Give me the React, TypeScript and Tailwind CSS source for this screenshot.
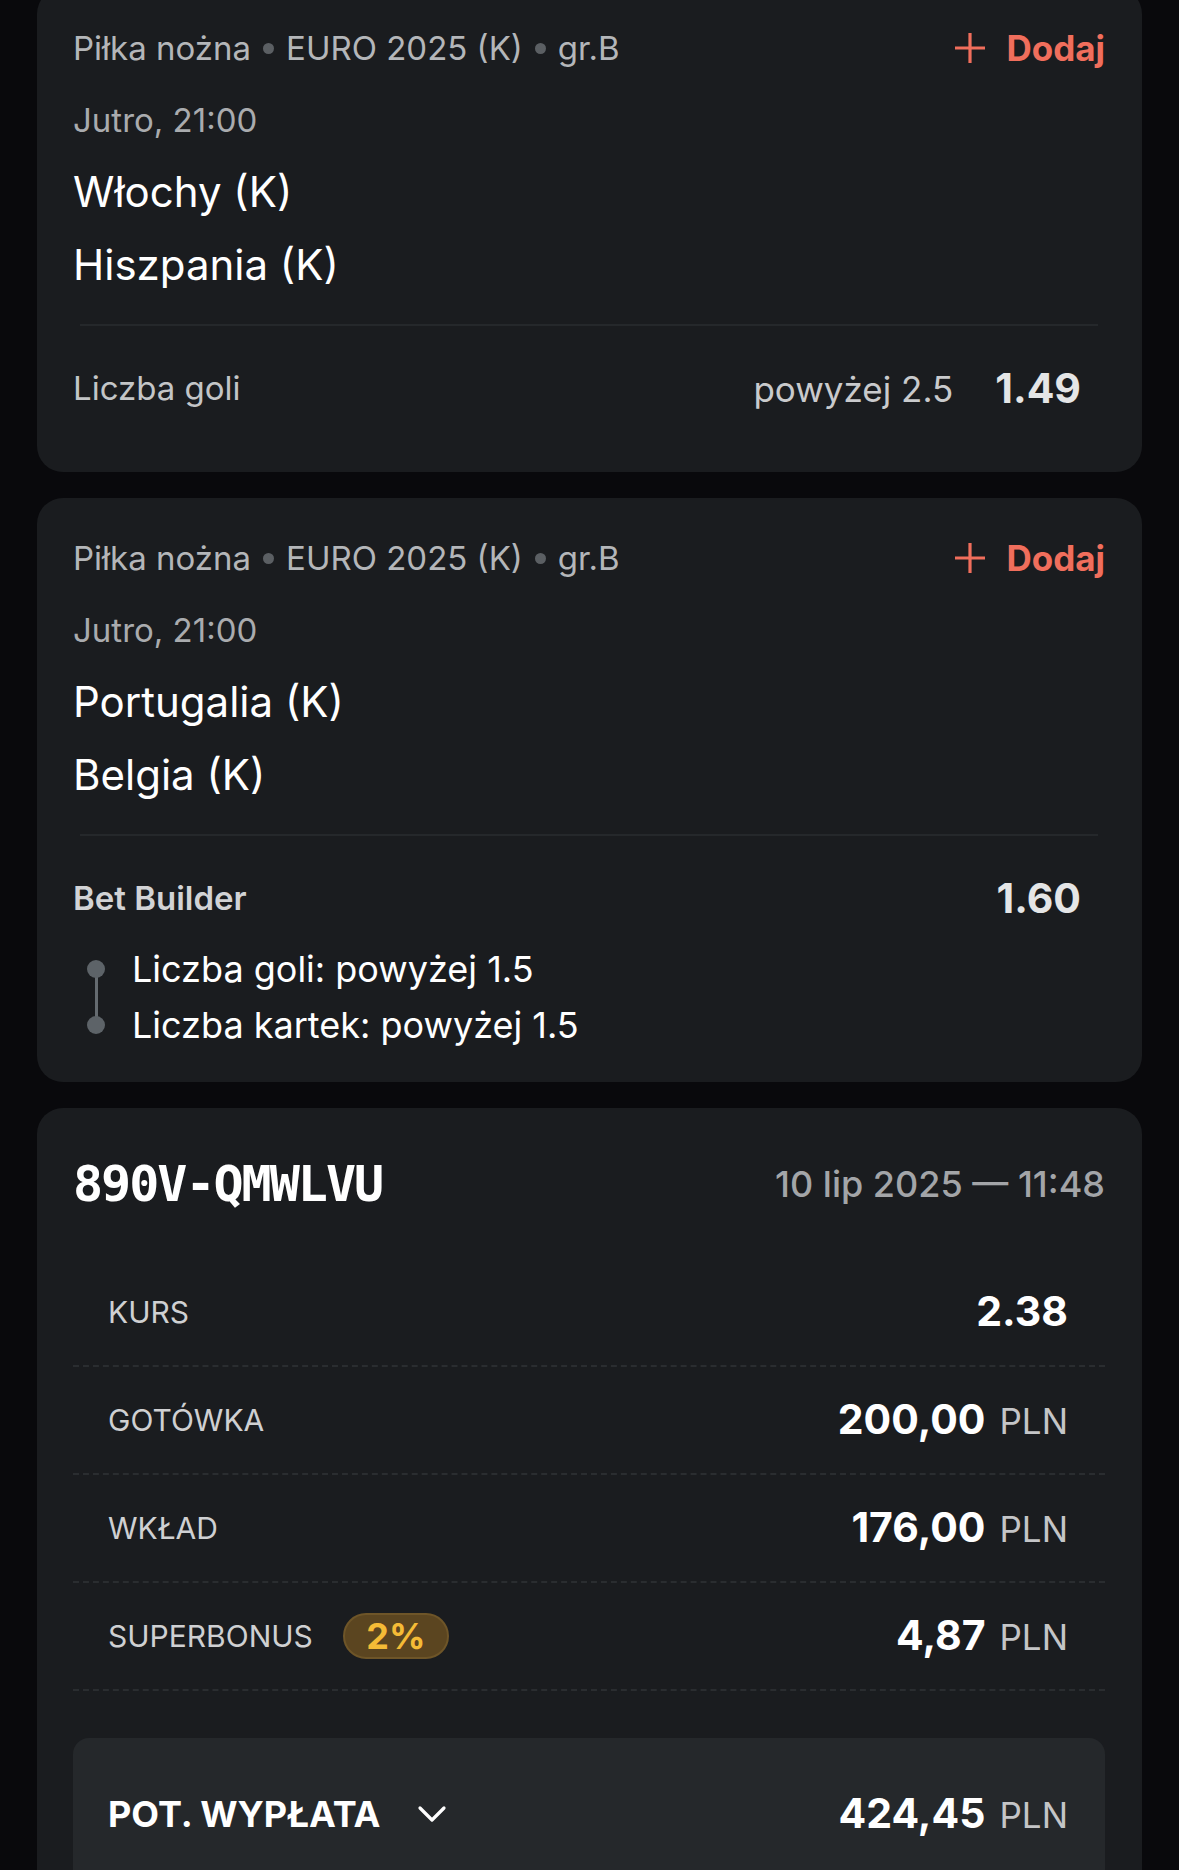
import React from "react";

const font = { fontFamily: "Inter, 'Noto Sans', sans-serif" };

function Plus() {
  return (
    <svg width="34" height="34" viewBox="0 0 34 34" className="shrink-0">
      <path d="M17 2V32M2 17H32" stroke="#f06e5c" strokeWidth="3.2" strokeLinecap="butt" />
    </svg>
  );
}

function Chevron() {
  return (
    <svg width="30" height="18" viewBox="0 0 30 18" className="ml-[37px] shrink-0">
      <path d="M3 3L15 15L27 3" stroke="#ffffff" strokeWidth="3.2" fill="none" strokeLinecap="round" strokeLinejoin="round" />
    </svg>
  );
}

function Header() {
  return (
    <div className="flex items-center justify-between h-[40px]">
      <div className="flex items-center text-[33px] text-[#b4b6b9] leading-[40px]">
        <span>Piłka nożna</span>
        <span className="mx-[12px] w-[11px] h-[11px] rounded-full bg-[#5b5f63]" />
        <span>EURO 2025 (K)</span>
        <span className="mx-[12px] w-[11px] h-[11px] rounded-full bg-[#5b5f63]" />
        <span>gr.B</span>
      </div>
      <div className="flex items-center gap-[19px] text-[#f06e5c] font-bold text-[35px] leading-[40px]">
        <Plus />
        <span>Dodaj</span>
      </div>
    </div>
  );
}

function Teams({ a, b }: { a: string; b: string }) {
  return (
    <>
      <div className="mt-[32px] text-[33px] leading-[40px] text-[#a9abae]">Jutro, 21:00</div>
      <div className="mt-[28px] text-[42px] leading-[48px] text-white">{a}</div>
      <div className="mt-[25px] text-[42px] leading-[48px] text-white">{b}</div>
      <div className="mt-[35px] mx-[7px] h-[2px] bg-[#25282b]" />
    </>
  );
}

function Row({ label, value, badge }: { label: string; value: React.ReactNode; badge?: boolean }) {
  return (
    <div className="flex items-center justify-between h-[108px] border-b-2 border-dashed border-[#2a2d30] pl-[35px] pr-[37px]">
      <div className="flex items-center">
        <span className="text-[30px] text-[#cfd0d2]">{label}</span>
        {badge && (
          <span className="ml-[30px] h-[46px] w-[106px] rounded-full bg-[#5b4520] border-2 border-[#6e5528] flex items-center justify-center text-[#f5bb36] font-bold text-[36px] leading-none">
            2%
          </span>
        )}
      </div>
      <div className="flex items-baseline">{value}</div>
    </div>
  );
}

function Money({ v }: { v: string }) {
  return (
    <>
      <span className="text-[41px] font-bold text-white">{v}</span>
      <span className="ml-[14px] text-[35px] text-[#c4c5c7]">PLN</span>
    </>
  );
}

export default function App() {
  return (
    <div className="min-h-[1870px] bg-[#09090c] px-[37px] pb-[40px]" style={font}>
      {/* Card 1 */}
      <div className="-mt-[12px] rounded-[26px] bg-[#1a1c1f] pl-[36px] pr-[37px] pt-[40px] pb-[63px]">
        <Header />
        <Teams a="Włochy (K)" b="Hiszpania (K)" />
        <div className="mt-[43px] flex items-center justify-between h-[40px] pr-[24px]">
          <span className="text-[33px] text-[#c3c5c7]">Liczba goli</span>
          <div className="flex items-center">
            <span className="text-[35px] text-[#c9cacc]">powyżej 2.5</span>
            <span className="ml-[42px] text-[41px] font-bold text-[#e4e5e6]">1.49</span>
          </div>
        </div>
      </div>

      {/* Card 2 */}
      <div className="mt-[26px] rounded-[26px] bg-[#1a1c1f] pl-[36px] pr-[37px] pt-[40px] pb-[29px]">
        <Header />
        <Teams a="Portugalia (K)" b="Belgia (K)" />
        <div className="mt-[43px] flex items-center justify-between h-[40px] pr-[24px]">
          <span className="text-[33px] font-semibold text-[#d2d3d5]">Bet Builder</span>
          <span className="text-[41px] font-bold text-[#e4e5e6]">1.60</span>
        </div>
        <div className="mt-[22px] relative">
          <div className="absolute left-[22px] top-[28px] h-[56px] w-[3px] bg-[#656b70]" />
          <div className="flex items-center h-[56px]">
            <span className="ml-[14px] w-[18px] h-[18px] rounded-full bg-[#5d6368] relative" />
            <span className="ml-[27px] text-[36px] text-white">Liczba goli: powyżej 1.5</span>
          </div>
          <div className="flex items-center h-[56px]">
            <span className="ml-[14px] w-[18px] h-[18px] rounded-full bg-[#5d6368] relative" />
            <span className="ml-[27px] text-[36px] text-white">Liczba kartek: powyżej 1.5</span>
          </div>
        </div>
      </div>

      {/* Card 3 */}
      <div className="mt-[26px] rounded-[26px] bg-[#1a1c1f] pl-[36px] pr-[37px] pt-[48px] pb-[40px]">
        <div className="flex items-center justify-between h-[56px]">
          <span
            className="text-[50px] font-bold text-white tracking-[-2px]"
            style={{ fontFamily: "'DejaVu Sans Mono', monospace" }}
          >
            890V-QMWLVU
          </span>
          <span className="text-[36px] font-medium text-[#a3a5a8]">10 lip 2025 — 11:48</span>
        </div>
        <div className="mt-[47px]">
          <Row label="KURS" value={<span className="text-[41px] font-bold text-white">2.38</span>} />
          <Row label="GOTÓWKA" value={<Money v="200,00" />} />
          <Row label="WKŁAD" value={<Money v="176,00" />} />
          <Row label="SUPERBONUS" badge value={<Money v="4,87" />} />
        </div>
        <div className="mt-[47px] rounded-[16px] bg-[#25282b] pl-[35px] pr-[37px] h-[200px]">
          <div className="flex items-center justify-between h-[152px]">
            <div className="flex items-center">
              <span className="text-[36px] font-bold text-white">POT. WYPŁATA</span>
              <Chevron />
            </div>
            <div className="flex items-baseline">
              <Money v="424,45" />
            </div>
          </div>
        </div>
      </div>
    </div>
  );
}
